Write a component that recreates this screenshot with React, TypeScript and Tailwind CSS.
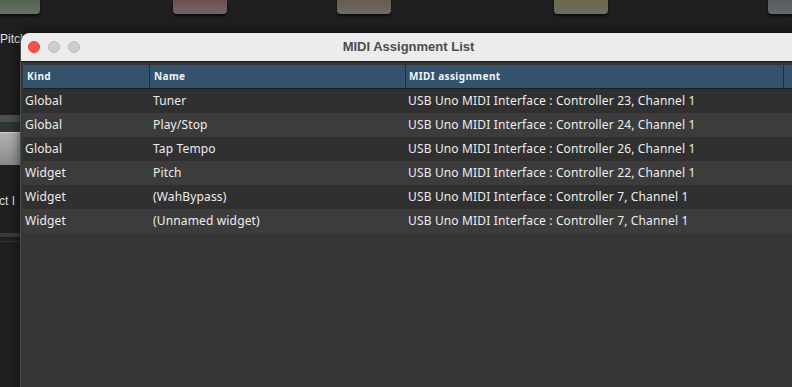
import React from "react";

type Row = { kind: string; name: string; midi: string };

const rows: Row[] = [
  { kind: "Global", name: "Tuner", midi: "USB Uno MIDI Interface : Controller 23, Channel 1" },
  { kind: "Global", name: "Play/Stop", midi: "USB Uno MIDI Interface : Controller 24, Channel 1" },
  { kind: "Global", name: "Tap Tempo", midi: "USB Uno MIDI Interface : Controller 26, Channel 1" },
  { kind: "Widget", name: "Pitch", midi: "USB Uno MIDI Interface : Controller 22, Channel 1" },
  { kind: "Widget", name: "(WahBypass)", midi: "USB Uno MIDI Interface : Controller 7, Channel 1" },
  { kind: "Widget", name: "(Unnamed widget)", midi: "USB Uno MIDI Interface : Controller 7, Channel 1" },
];

// pedal buttons peeking in from the top of the host app
const pads = [
  { ml: "ml-[-14px]", color: "from-[#4f6350] to-[#6a706a]" },
  { ml: "ml-[133px]", color: "from-[#704e50] to-[#6d6768]" },
  { ml: "ml-[110px]", color: "from-[#685d4b] to-[#6b6a67]" },
  { ml: "ml-[163px]", color: "from-[#6e6a46] to-[#6c6b66]" },
  { ml: "ml-[160px]", color: "from-[#545a62] to-[#66696c]" },
];

const MidiWindow = () => (
  <div className="absolute left-[20px] top-[33px] right-[-8px] bottom-[-8px] flex flex-col rounded-t-[9px] overflow-hidden bg-[#363636] border-l border-[#4c4c4c] shadow-[0_0_12px_rgba(0,0,0,0.6)]">
    <div className="relative flex h-[29px] shrink-0 items-center bg-[#ececec] border-b border-[#151515]">
      <div className="flex items-center gap-[8px] pl-[7px]">
        <span className="h-[12px] w-[12px] rounded-full bg-[#fe4f4b] border border-[#e4433f]" />
        <span className="h-[12px] w-[12px] rounded-full bg-[#cdcdcd] border border-[#bdbdbd]" />
        <span className="h-[12px] w-[12px] rounded-full bg-[#cdcdcd] border border-[#bdbdbd]" />
      </div>
      <div className="absolute left-[320px] w-[135px] text-center text-[13px] font-bold text-[#4c4c4c]">
        MIDI Assignment List
      </div>
    </div>
    <div className="pt-[3px] pl-[2px] font-['Noto_Sans',sans-serif]">
      <div className="grid grid-cols-[127px_256px_378px_1fr] h-[24px] bg-[#33536d] border-b border-[#1a1f24] text-[10px] font-bold tracking-[0.4px] text-[#f2f4f6]">
        <div className="flex items-center pl-[4px] border-r border-[#1d2f3e]">Kind</div>
        <div className="flex items-center pl-[4px] border-r border-[#1d2f3e]">Name</div>
        <div className="flex items-center pl-[3px] border-r border-[#1d2f3e]">MIDI assignment</div>
        <div />
      </div>
      {rows.map((r, i) => (
        <div
          key={i}
          className={`grid grid-cols-[127px_256px_378px_1fr] h-[24px] items-center text-[12px] tracking-[0.15px] text-[#ededed] ${
            i % 2 === 0 ? "bg-[#303030]" : "bg-[#3c3c3c]"
          }`}
        >
          <div className="pl-[2px]">{r.kind}</div>
          <div className="pl-[3px]">{r.name}</div>
          <div className="pl-[2px]">{r.midi}</div>
          <div />
        </div>
      ))}
    </div>
  </div>
);

export default function App() {
  return (
    <div className="relative w-[792px] h-[387px] overflow-hidden bg-[#1f1f1f] font-['Liberation_Sans',Arial,sans-serif]">
      <div className="flex h-[14px]">
        {pads.map((p, i) => (
          <div
            key={i}
            className={`${p.ml} h-[14px] w-[54px] shrink-0 rounded-b-[4px] bg-gradient-to-b ${p.color} shadow-[0_2px_3px_rgba(0,0,0,0.7)]`}
          />
        ))}
      </div>
      <div className="mt-[19px] h-[12px] text-[12px] leading-[12px] text-[#e4e4e4]">Pitch</div>
      <div className="w-[20px] mt-[70px]">
        <div className="h-[7px] bg-[#4e4e4e]" />
        <div className="h-[10px] bg-[#2d372e]" />
        <div className="h-[33px] bg-gradient-to-b from-[#b2b2b2] to-[#8a8a8a] border-t border-[#cfcfcf]" />
        <div className="mt-[29px] overflow-hidden whitespace-nowrap text-[12px] leading-[14px] text-[#dcdcdc] -ml-[1px]">ct I</div>
        <div className="mt-[25px] h-[4px] bg-[#3a3a3a]" />
        <div className="mt-[4px] h-[1px] bg-[#333]" />
      </div>
      <MidiWindow />
    </div>
  );
}
